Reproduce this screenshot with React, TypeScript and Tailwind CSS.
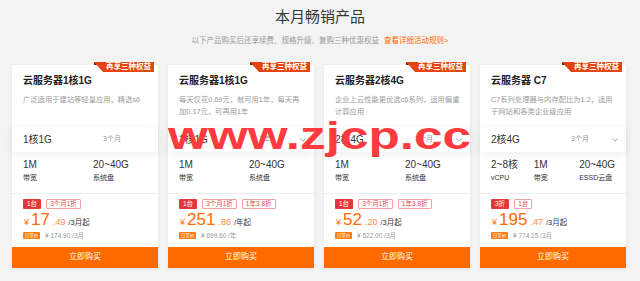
import { ChevronDown } from 'lucide-react';

type Product = {
  title: string;
  desc: string[];
  config: string;
  period: string;
  chevron: boolean;
  specs: { value: string; label: string; w: string }[];
  tags: string[];
  yuan: string;
  cents: string;
  unit: string;
  daily: string;
};

const PRODUCTS: Product[] = [
  {
    title: '云服务器1核1G',
    desc: ['广泛适用于建站等轻量应用，精选s6'],
    config: '1核1G',
    period: '3个月',
    chevron: false,
    specs: [
      { value: '1M', label: '带宽', w: 'w-[70px]' },
      { value: '20~40G', label: '系统盘', w: 'flex-1' },
    ],
    tags: ['1台', '3个月1折'],
    yuan: '17',
    cents: '.49',
    unit: '/3月起',
    daily: '¥ 174.90 /3月',
  },
  {
    title: '云服务器1核1G',
    desc: ['每天仅花0.69元，就可用1年，每天再', '加0.17元，可再用1年'],
    config: '1核1G',
    period: '1年',
    chevron: true,
    specs: [
      { value: '1M', label: '带宽', w: 'w-[70px]' },
      { value: '20~40G', label: '系统盘', w: 'flex-1' },
    ],
    tags: ['1台', '3个月1折', '1年3.8折'],
    yuan: '251',
    cents: '.86',
    unit: '/年起',
    daily: '¥ 699.60 /年',
  },
  {
    title: '云服务器2核4G',
    desc: ['企业上云性能更优选c6系列，适用偏重', '计算应用'],
    config: '2核4G',
    period: '3个月',
    chevron: true,
    specs: [
      { value: '1M', label: '带宽', w: 'w-[70px]' },
      { value: '20~40G', label: '系统盘', w: 'flex-1' },
    ],
    tags: ['1台', '3个月1折', '1年3.8折'],
    yuan: '52',
    cents: '.20',
    unit: '/3月起',
    daily: '¥ 522.00 /3月',
  },
  {
    title: '云服务器 C7',
    desc: ['C7系列处理器与内存配比为1:2，适用', '于网站和各类企业级应用'],
    config: '2核4G',
    period: '3个月',
    chevron: true,
    specs: [
      { value: '2~8核', label: 'vCPU', w: 'w-[46px]' },
      { value: '1M', label: '带宽', w: 'w-[49px]' },
      { value: '20~40G', label: 'ESSD云盘', w: 'flex-1' },
    ],
    tags: ['3折', '1台'],
    yuan: '195',
    cents: '.47',
    unit: '/3月起',
    daily: '¥ 774.15 /3月',
  },
];

const FONT = "font-['Liberation_Sans','Noto_Sans_CJK_SC',sans-serif]";

function Ribbon() {
  return (
    <div className="absolute -top-[3px] right-[4px] h-[10px] w-[60px]">
      <div className="absolute left-0 top-0 h-[3px] w-[5px] bg-[#7a2306] [clip-path:polygon(0_0,100%_100%,0_100%)]" />
      <div className="flex h-full items-center justify-end bg-[#e2450f] pr-[3px] text-[7.5px] font-bold leading-none text-white [clip-path:polygon(0_0,100%_0,100%_100%,9px_100%)]">
        再享三种权益
      </div>
    </div>
  );
}

function ProductCard({ p }: { p: Product }) {
  return (
    <div className="relative flex w-[146px] flex-col bg-white shadow-[0_1px_4px_rgba(0,0,0,0.06)]">
      <Ribbon />
      <div className="px-[11px] pt-[9px] text-[10px] font-bold leading-[14px] text-[#222]">{p.title}</div>
      <div className="mt-[6px] h-[24px] px-[11px] text-[7.3px] leading-[12px] text-[#9a9a9a]">
        {p.desc.map((line) => (
          <div key={line} className="whitespace-nowrap">
            {line}
          </div>
        ))}
      </div>
      <div className="mt-[9px] flex h-[25px] items-center bg-white pl-[11px] pr-[6px] shadow-[0_2px_8px_rgba(0,0,0,0.07)]">
        <span className="w-[80px] text-[10px] text-[#333]">{p.config}</span>
        <span className="text-[7px] text-[#999]">{p.period}</span>
        {p.chevron && <ChevronDown className="ml-auto h-[10px] w-[10px] text-[#666]" strokeWidth={1.5} />}
      </div>
      <div className="flex px-[11px] pt-[6px] pb-[10px]">
        {p.specs.map((s) => (
          <div key={s.label} className={s.w}>
            <div className="text-[10px] leading-[14px] text-[#333]">{s.value}</div>
            <div className="mt-[1px] text-[7px] leading-[10px] text-[#333]">{s.label}</div>
          </div>
        ))}
      </div>
      <div className="h-px bg-[#eeeeee]" />
      <div className="flex gap-[5px] px-[11px] pt-[5px]">
        {p.tags.map((t, i) => (
          <span
            key={t}
            className={
              i === 0
                ? 'flex h-[10px] items-center rounded-[1px] bg-[#e3383b] px-[4px] text-[6.5px] leading-none text-white'
                : 'flex h-[10px] items-center rounded-[1px] border border-[#f2a1a3] px-[3px] text-[6.5px] leading-none text-[#e5494c]'
            }
          >
            {t}
          </span>
        ))}
      </div>
      <div className="flex h-[21px] items-baseline px-[12px] pt-[1px]">
        <span className="mr-[2px] text-[9px] text-[#ff6a00]">¥</span>
        <span className="text-[17px] leading-[20px] text-[#ff6a00]">{p.yuan}</span>
        <span className="mx-[3px] text-[9px] text-[#fb8c45]">{p.cents}</span>
        <span className="text-[7.5px] text-[#333]">{p.unit}</span>
      </div>
      <div className="flex items-center gap-[5px] px-[11px] pt-[1px]">
        <span className="flex h-[7px] w-[17px] items-center justify-center rounded-[1px] bg-[#ff7a12] text-[4.5px] leading-none text-white">
          日常价
        </span>
        <span className="text-[6.5px] text-[#999]">{p.daily}</span>
      </div>
      <div className="mt-[6px] flex h-[21px] items-center justify-center bg-[#ff6a00] text-[8px] text-white">立即购买</div>
    </div>
  );
}

export default function App() {
  return (
    <div className={`relative h-[281px] w-[640px] overflow-hidden bg-[#f3f3f3] ${FONT}`}>
      <h2 className="pt-[8px] text-center text-[15px] font-normal leading-[18px] text-[#333]">本月畅销产品</h2>
      <p className="mt-[10px] text-center text-[7.5px] leading-[10px] text-[#999]">
        以下产品购买后还享续费、规格升级、复购三种优惠权益
        <span className="ml-[5px] text-[#ff6a00]">查看详细活动规则&gt;</span>
      </p>
      <div className="mt-[19px] flex gap-[10px] pl-[12px]">
        {PRODUCTS.map((p) => (
          <ProductCard key={p.title + p.yuan} p={p} />
        ))}
      </div>
      <div className="pointer-events-none absolute left-[168px] top-[117px] origin-left scale-x-[1.35] whitespace-nowrap font-['Liberation_Sans',sans-serif] text-[38px] font-bold leading-[38px] text-[#ff3b3f]">
        www.zjcp.cc
      </div>
    </div>
  );
}
